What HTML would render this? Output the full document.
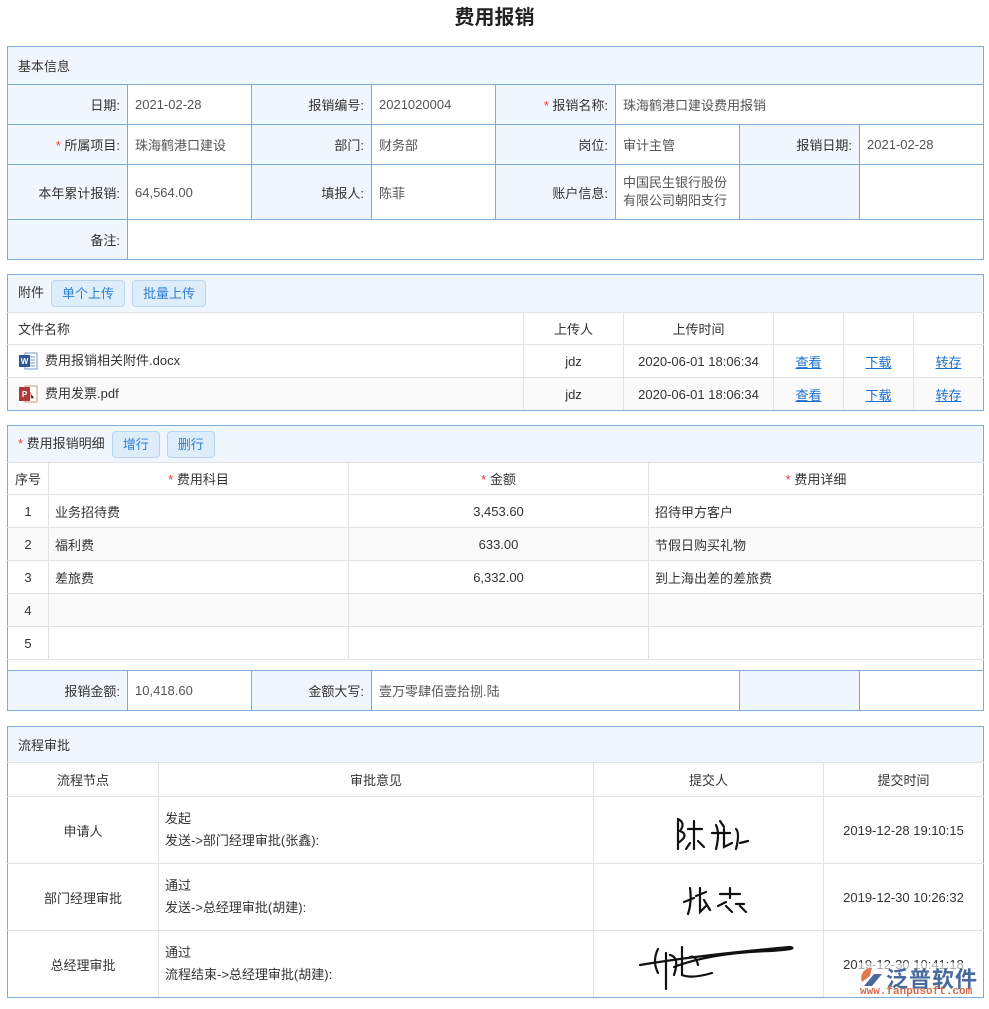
<!DOCTYPE html>
<html><head><meta charset="utf-8">
<style>
*{margin:0;padding:0;box-sizing:border-box}
body{width:989px;height:1009px;background:#fff;font-family:"Liberation Sans","Noto Sans CJK SC",sans-serif;font-size:13px;color:#333;position:relative;overflow:hidden}
h1{position:absolute;top:5px;left:0;width:989px;text-align:center;font-size:20px;font-weight:bold;color:#222;line-height:26px}
table{position:absolute;left:7px;width:976px;border-collapse:collapse;table-layout:fixed}
td{overflow:hidden;white-space:nowrap}
.f td{border:1px solid #7eaad6;padding:0 7px}
.f td.l{background:#f0f6fd;text-align:right}
.f td.v{color:#555}
.hd td{background:#f0f6fd;border:1px solid #7eaad6;padding:0 10px}
.g{border:1px solid #7eaad6}
.g td{border:1px solid #e2e2e2;padding:0 6px}
.g tr.hd td{border:1px solid #7eaad6;border-bottom:1px solid #e2e2e2}
.g td:first-child{border-left:1px solid #7eaad6}
.g td:last-child{border-right:1px solid #7eaad6}
.g tr:last-child td{border-bottom:1px solid #7eaad6}
.c{text-align:center}
.z td{background:#fafafa}
.s{color:#e33}
.btn{display:inline-block;height:27px;line-height:25px;padding:0 10px;border:1px solid #b9d5ee;background:#deedfa;color:#2f7fd0;border-radius:4px;margin-left:7px;vertical-align:middle}
a{color:#1a6fd0;text-decoration:underline}
.ic{display:inline-block;width:20px;height:20px;vertical-align:middle;margin-right:7px;position:relative;top:-1px}
</style></head><body>
<h1>费用报销</h1>

<table class="f" style="top:46px">
<colgroup><col style="width:120px"><col style="width:124px"><col style="width:120px"><col style="width:124px"><col style="width:120px"><col style="width:124px"><col style="width:120px"><col style="width:124px"></colgroup>
<tr class="hd" style="height:38px"><td colspan="8">基本信息</td></tr>
<tr style="height:40px"><td class="l">日期:</td><td class="v">2021-02-28</td><td class="l">报销编号:</td><td class="v">2021020004</td><td class="l"><span class="s">*</span> 报销名称:</td><td class="v" colspan="3">珠海鹤港口建设费用报销</td></tr>
<tr style="height:40px"><td class="l"><span class="s">*</span> 所属项目:</td><td class="v">珠海鹤港口建设</td><td class="l">部门:</td><td class="v">财务部</td><td class="l">岗位:</td><td class="v">审计主管</td><td class="l">报销日期:</td><td class="v">2021-02-28</td></tr>
<tr style="height:55px"><td class="l">本年累计报销:</td><td class="v">64,564.00</td><td class="l">填报人:</td><td class="v">陈菲</td><td class="l">账户信息:</td><td class="v" style="white-space:normal;line-height:18px">中国民生银行股份有限公司朝阳支行</td><td class="l"></td><td class="v"></td></tr>
<tr style="height:40px"><td class="l">备注:</td><td class="v" colspan="7"></td></tr>
</table>

<table class="g" style="top:274px">
<colgroup><col style="width:516px"><col style="width:100px"><col style="width:150px"><col style="width:70px"><col style="width:70px"><col style="width:70px"></colgroup>
<tr class="hd" style="height:38px"><td colspan="6" style="padding-left:10px">附件<span class="btn">单个上传</span><span class="btn">批量上传</span></td></tr>
<tr style="height:32px"><td style="padding-left:10px">文件名称</td><td class="c">上传人</td><td class="c">上传时间</td><td></td><td></td><td></td></tr>
<tr style="height:33px"><td style="padding-left:10px"><svg class="ic" viewBox="0 0 20 20"><rect x="7" y="2" width="12" height="16" fill="#fff" stroke="#7a94c0"/><path d="M9 6h8M9 9h8M9 12h8M9 15h8" stroke="#7a94c0"/><rect x="1" y="4" width="11" height="12" fill="#2b5797"/><text x="6.5" y="13" font-size="8" fill="#fff" text-anchor="middle" font-family="Liberation Sans" font-weight="bold">W</text></svg>费用报销相关附件.docx</td><td class="c">jdz</td><td class="c">2020-06-01 18:06:34</td><td class="c"><a>查看</a></td><td class="c"><a>下载</a></td><td class="c"><a>转存</a></td></tr>
<tr class="z" style="height:33px"><td style="padding-left:10px"><svg class="ic" viewBox="0 0 20 20"><rect x="7" y="2" width="12" height="16" fill="#fff" stroke="#c98"/><path d="M11 7l2 3M13 10v4h3" stroke="#c66"/><rect x="1" y="3" width="11" height="14" fill="#b03a3a"/><text x="6.5" y="13" font-size="8" fill="#fff" text-anchor="middle" font-family="Liberation Sans" font-weight="bold">P</text></svg>费用发票.pdf</td><td class="c">jdz</td><td class="c">2020-06-01 18:06:34</td><td class="c"><a>查看</a></td><td class="c"><a>下载</a></td><td class="c"><a>转存</a></td></tr>
</table>

<table class="g" style="top:425px">
<colgroup><col style="width:41px"><col style="width:300px"><col style="width:300px"><col style="width:335px"></colgroup>
<tr class="hd" style="height:37px"><td colspan="4" style="padding-left:10px"><span class="s">*</span> 费用报销明细<span class="btn">增行</span><span class="btn">删行</span></td></tr>
<tr style="height:32px"><td class="c" style="padding:0">序号</td><td class="c"><span class="s">*</span> 费用科目</td><td class="c"><span class="s">*</span> 金额</td><td class="c"><span class="s">*</span> 费用详细</td></tr>
<tr style="height:33px"><td class="c">1</td><td>业务招待费</td><td class="c">3,453.60</td><td>招待甲方客户</td></tr>
<tr class="z" style="height:33px"><td class="c">2</td><td>福利费</td><td class="c">633.00</td><td>节假日购买礼物</td></tr>
<tr style="height:33px"><td class="c">3</td><td>差旅费</td><td class="c">6,332.00</td><td>到上海出差的差旅费</td></tr>
<tr class="z" style="height:33px"><td class="c">4</td><td></td><td></td><td></td></tr>
<tr style="height:33px"><td class="c">5</td><td></td><td></td><td></td></tr>
<tr style="height:11px"><td colspan="4" style="border-bottom:1px solid #7eaad6"></td></tr>
</table>
<table class="f" style="top:670px">
<colgroup><col style="width:120px"><col style="width:124px"><col style="width:120px"><col style="width:124px"><col style="width:120px"><col style="width:124px"><col style="width:120px"><col style="width:124px"></colgroup>
<tr style="height:40px"><td class="l">报销金额:</td><td class="v">10,418.60</td><td class="l">金额大写:</td><td class="v" colspan="3">壹万零肆佰壹拾捌.陆</td><td class="l"></td><td class="v"></td></tr>
</table>

<table class="g" style="top:726px">
<colgroup><col style="width:151px"><col style="width:435px"><col style="width:230px"><col style="width:160px"></colgroup>
<tr class="hd" style="height:36px"><td colspan="4" style="padding-left:10px">流程审批</td></tr>
<tr style="height:34px"><td class="c">流程节点</td><td class="c">审批意见</td><td class="c">提交人</td><td class="c">提交时间</td></tr>
<tr style="height:67px"><td class="c">申请人</td><td style="line-height:22px">发起<br>发送-&gt;部门经理审批(张鑫):</td><td><svg width="230" height="60" viewBox="0 0 230 60" fill="none" stroke="#111" stroke-width="2.2" stroke-linecap="round"><path d="M78 20v30M78 20q8 4 2 12q10 4-2 12M88 30h14M94 22v28M90 44l-4 6M98 42l6 6M116 26q4 8 0 24M112 34h18M120 22l4 6M124 30v18l8-4M136 30q4 4 0 20M140 44l8-2"/></svg></td><td class="c">2019-12-28 19:10:15</td></tr>
<tr style="height:67px"><td class="c">部门经理审批</td><td style="line-height:22px">通过<br>发送-&gt;总经理审批(胡建):</td><td><svg width="230" height="60" viewBox="0 0 230 60" fill="none" stroke="#111" stroke-width="2.2" stroke-linecap="round"><path d="M84 36l10-4M90 22q2 14-2 26M96 30l10-4M100 22v24l6-6M104 34l6 10M120 28h20M130 22v10M118 40l8-4M126 40l6 6M136 38l8 0M140 40l6 6"/></svg></td><td class="c">2019-12-30 10:26:32</td></tr>
<tr style="height:67px"><td class="c">总经理审批</td><td style="line-height:22px">通过<br>流程结束-&gt;总经理审批(胡建):</td><td><svg width="230" height="60" viewBox="0 0 230 60" fill="none" stroke="#111" stroke-width="2.2" stroke-linecap="round"><path d="M40 32q60-10 150-18q10 2-20 4q-60 2-96 16M58 16q-6 12 0 24M66 20v36M70 22q10 2 4 20M82 14v28q10 4 30-2M90 24q6-2 8 8"/></svg></td><td class="c">2019-12-30 10:41:18</td></tr>
</table>
<div style="position:absolute;left:858px;top:963px;width:124px;height:34px;background:rgba(255,255,255,0.6)">
<svg style="position:absolute;left:2px;top:3px" width="24" height="22" viewBox="0 0 24 22"><path d="M12 2A10 10 0 0 0 2 16l8-6z" fill="#e07a50"/><path d="M4 20l10-12 8 0-10 12z" fill="#4a6a9c"/></svg>
<span style="position:absolute;left:28px;top:-1px;font-size:22px;font-weight:bold;color:#4a6a9c;letter-spacing:1px;font-family:'Noto Sans CJK SC',sans-serif">泛普软件</span>
<span style="position:absolute;left:2px;top:23px;font-size:11px;font-weight:bold;color:#d86a4a;font-family:'Liberation Mono',monospace">www.fanpusoft.com</span>
</div>
</body></html>
